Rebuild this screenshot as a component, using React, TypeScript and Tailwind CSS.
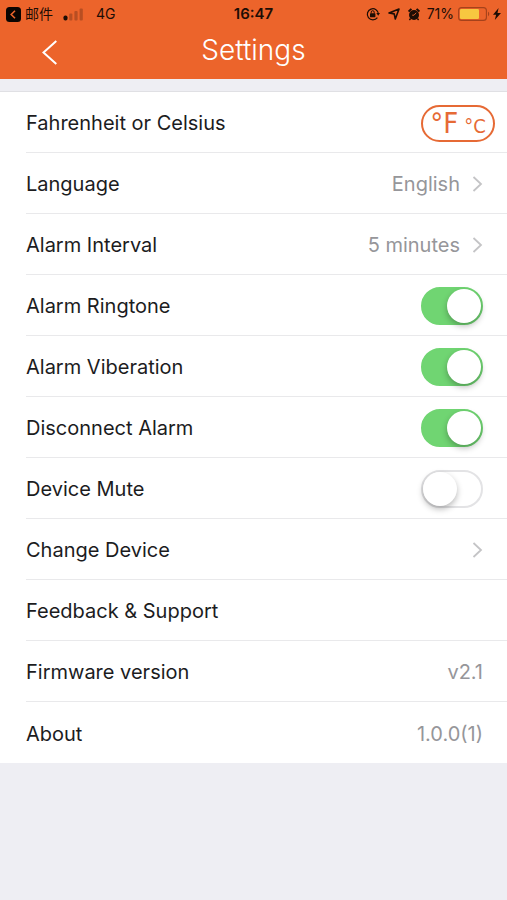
import { useState } from "react"
import type { ReactNode } from "react"

function StatusBar() {
    return (
        <div className="grid grid-cols-[1fr_auto_1fr] items-center h-7 pl-[6px] pr-[6px] text-[14px] leading-5 text-[#1d0d05]">
            {/* Back to app, signal, network */}
            <div className="flex items-center">
                <a href="#mail" className="flex items-center">
                    <svg className="w-[15px] h-[15px]" viewBox="0 0 15 15" aria-hidden="true">
                        <rect width="15" height="15" rx="3.5" fill="#0a0502" />
                        <path d="M9 3.8 5.2 7.5 9 11.2" fill="none" stroke="#ec642b" strokeWidth="1.6" />
                    </svg>
                    <span className="ml-1">邮件</span>
                </a>
                <svg className="w-[21px] h-[13px] ml-[10px]" viewBox="0 0 21 13" aria-hidden="true">
                    <rect x="0.5" y="7.5" width="4" height="5" rx="1.8" fill="#1d0d05" />
                    <rect x="6.2" y="5.5" width="3.2" height="7" rx="1" fill="#b84e22" />
                    <rect x="11.4" y="3" width="3.2" height="9.5" rx="1" fill="#b84e22" />
                    <rect x="16.6" y="0.5" width="3.2" height="12" rx="1" fill="#b84e22" />
                </svg>
                <span className="ml-3">4G</span>
            </div>

            <span className="font-semibold text-[15px]">16:47</span>

            {/* Lock, location, alarm, battery */}
            <div className="flex items-center justify-end">
                <svg className="w-[14px] h-[14px]" viewBox="0 0 14 14" aria-hidden="true">
                    <path d="M11.4 10.7A5.6 5.6 0 1 1 12.5 7" fill="none" stroke="#1d0d05" strokeWidth="1.2" />
                    <path d="M10.3 6h3.7l-1.8 2.7Z" fill="#1d0d05" />
                    <rect x="4" y="6.3" width="5.4" height="3.9" rx="0.6" fill="#1d0d05" />
                    <path d="M5.2 6.5V5.2a1.5 1.5 0 0 1 3 0v1.3" fill="none" stroke="#1d0d05" strokeWidth="1" />
                </svg>
                <svg className="w-3 h-3 ml-2" viewBox="0 0 12 12" aria-hidden="true">
                    <path d="M11 1 7.3 11 6.2 5.9 1 4.9Z" fill="none" stroke="#1d0d05" strokeWidth="1.6" strokeLinejoin="round" />
                </svg>
                <svg className="w-3 h-[13px] ml-2" viewBox="0 0 12 13" aria-hidden="true">
                    <circle cx="6" cy="7" r="5" fill="#1d0d05" />
                    <path d="M0.6 3.6 3.4 0.9M11.4 3.6 8.6 0.9" stroke="#1d0d05" strokeWidth="2" />
                    <path d="M2.6 10.5 1.4 12M9.4 10.5l1.2 1.5" stroke="#1d0d05" strokeWidth="1.4" />
                    <path d="M8.2 4.8 6 7.2H4.2" fill="none" stroke="#ec642b" strokeWidth="0.9" />
                </svg>
                <span className="ml-[7px]">71%</span>
                <svg className="w-8 h-[14px] ml-1" viewBox="0 0 32 14" aria-hidden="true">
                    <rect x="0.6" y="0.6" width="27.8" height="12.8" rx="3" fill="none" stroke="#a5421b" strokeWidth="1.1" />
                    <rect x="2" y="2" width="19" height="10" rx="1.2" fill="#f7c740" />
                    <path d="M30 4.8c1.6.6 1.6 3.8 0 4.4Z" fill="#a5421b" />
                </svg>
                <svg className="w-2 h-3 ml-[3px]" viewBox="0 0 8 12" aria-hidden="true">
                    <path d="M5.6 0 0 6.8h3.1L1.8 12 8 4.9H4.5Z" fill="#1d0d05" />
                </svg>
            </div>
        </div>
    )
}

function Chevron() {
    return (
        <svg className="w-[11px] h-4 ml-3" viewBox="0 0 11 16" aria-hidden="true">
            <path d="M1.5 1 9 8l-7.5 7" fill="none" stroke="#c4c4c6" strokeWidth="1.8" />
        </svg>
    )
}

function Row({ children }: { children: ReactNode }) {
    return (
        <li className="flex items-center justify-between min-h-[61px] ml-[26px] pt-[2px] pr-6 border-b border-[#e9e9eb] last:border-b-0">
            {children}
        </li>
    )
}

function ToggleRow({ id, label, initial }: { id: string; label: string; initial: boolean }) {
    const [on, setOn] = useState(initial)
    return (
        <Row>
            <label htmlFor={id}>{label}</label>
            <input
                id={id}
                type="checkbox"
                role="switch"
                checked={on}
                onChange={(e) => setOn(e.target.checked)}
                className="appearance-none flex items-center w-[62px] h-[38px] rounded-full border-2 border-[#e3e3e5] bg-white checked:border-[#70d572] checked:bg-[#70d572] checked:justify-end before:block before:size-[34px] before:rounded-full before:bg-white before:shadow-[0_3px_6px_rgba(0,0,0,0.28)]"
            />
        </Row>
    )
}

function LinkRow({ label, value }: { label: string; value?: string }) {
    return (
        <Row>
            <a href="#" className="flex flex-1 items-center">
                <span>{label}</span>
                <span className="ml-auto text-[#96969a]">{value}</span>
                <Chevron />
            </a>
        </Row>
    )
}

export default function App() {
    const [fahrenheit, setFahrenheit] = useState(true)
    const big = "text-[29px]"
    const small = "text-[20px] font-extralight"

    return (
        <div className="min-h-screen bg-[#eeeef3] font-[Inter,'Noto_Sans_CJK_SC',sans-serif] text-[#1c1c1e]">
            <header className="bg-[#ec642b]">
                <StatusBar />
                <div className="grid grid-cols-[1fr_auto_1fr] items-center h-[51px] pb-2">
                    <button type="button" aria-label="Back" className="justify-self-start ml-[42px] mt-[6px]">
                        <svg className="w-4 h-[25px]" viewBox="0 0 16 25" aria-hidden="true">
                            <path d="M14.3 1 1.5 12.5 14.3 24" fill="none" stroke="#fff" strokeWidth="2" />
                        </svg>
                    </button>
                    <h1 className="text-[28px] leading-8 font-light text-white">Settings</h1>
                </div>
            </header>

            <ul className="mt-3 border-t border-[#e0e0e4] bg-white text-[20px] leading-6">
                <li className="flex items-center justify-between min-h-[61px] ml-[26px] pt-[2px] pr-3 border-b border-[#e9e9eb]">
                    <span>Fahrenheit or Celsius</span>
                    <button
                        type="button"
                        aria-label="Fahrenheit or Celsius"
                        onClick={() => setFahrenheit(!fahrenheit)}
                        className="flex items-baseline justify-center gap-[6px] w-[74px] h-[37px] rounded-full border-2 border-[#e66a35] font-['DejaVu_Sans_Condensed','DejaVu_Sans',sans-serif] leading-8 text-[#e66a35]"
                    >
                        <span className={fahrenheit ? big : small}>°F</span>
                        <span className={fahrenheit ? small : big}>°C</span>
                    </button>
                </li>
                <LinkRow label="Language" value="English" />
                <LinkRow label="Alarm Interval" value="5 minutes" />
                <ToggleRow id="ringtone" label="Alarm Ringtone" initial={true} />
                <ToggleRow id="vibration" label="Alarm Viberation" initial={true} />
                <ToggleRow id="disconnect" label="Disconnect Alarm" initial={true} />
                <ToggleRow id="mute" label="Device Mute" initial={false} />
                <LinkRow label="Change Device" />
                <Row>
                    <a href="#" className="flex-1">Feedback &amp; Support</a>
                </Row>
                <Row>
                    <span>Firmware version</span>
                    <span className="text-[#96969a]">v2.1</span>
                </Row>
                <Row>
                    <span>About</span>
                    <span className="text-[#96969a]">1.0.0(1)</span>
                </Row>
            </ul>
        </div>
    )
}
